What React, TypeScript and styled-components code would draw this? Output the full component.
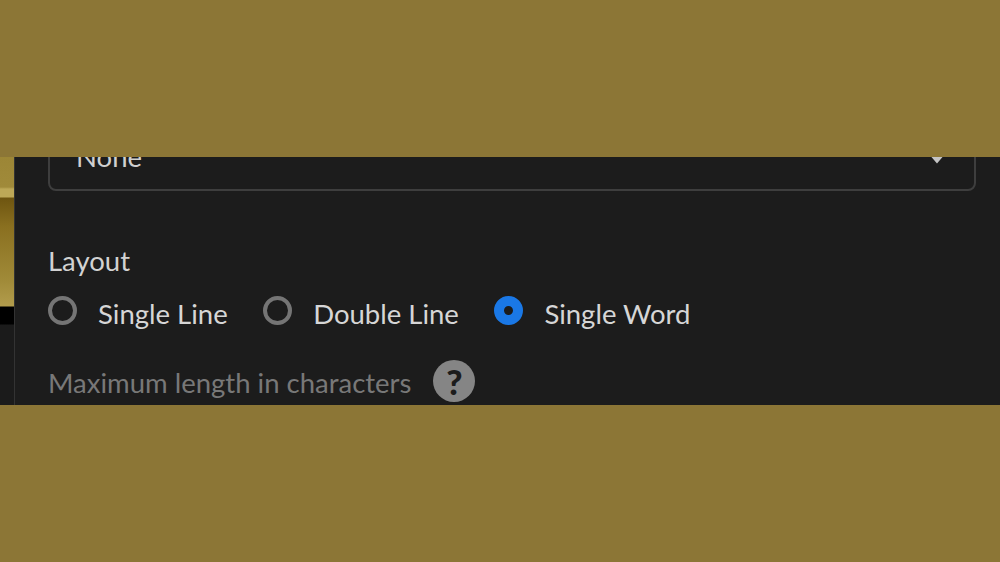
import styled, { createGlobalStyle } from 'styled-components'

const GlobalStyle = createGlobalStyle`
  html, body {
    margin: 0;
    padding: 0;
    background: #8c7636;
  }
`

const Page = styled.div`
  width: 1000px;
  height: 562px;
  display: flex;
  flex-direction: column;
  overflow: hidden;
  background: #8c7636;
`

const Band = styled.div<{ $h: number }>`
  height: ${props => props.$h}px;
  flex: none;
`

const Middle = styled.div`
  height: 248px;
  flex: none;
  display: flex;
`

const Strip = styled.div`
  width: 14px;
  flex: none;
  background: linear-gradient(
    to bottom,
    #9c8636 0,
    #a08a3a 30px,
    #bda857 32px,
    #bda857 40px,
    #6e5510 41px,
    #8a7020 70px,
    #a08a38 123px,
    #b29c4c 149px,
    #000 150px,
    #000 167px,
    #1b1b1b 168px,
    #1b1b1b 100%
  );
`

const Dialog = styled.div`
  flex: 1;
  overflow: hidden;
  background: #1c1c1c;
  border-left: 1px solid #333;
  padding: 0 24px 0 33px;
  font-family: Lato, "Open Sans", sans-serif;
`

const Select = styled.div`
  height: 69px;
  margin-top: -35px;
  box-sizing: border-box;
  border: 2px solid #3e3e3e;
  border-radius: 8px;
  display: flex;
  align-items: center;
  justify-content: space-between;
  padding: 0 27px 0 26px;
  font-size: 27.5px;
  color: #d0d0d0;
`

const Chevron = styled.svg`
  width: 20px;
  height: 16px;
`

const Heading = styled.div`
  margin-top: 52px;
  font-size: 27.5px;
  line-height: 36px;
  color: #d2d2d2;
`

const RadioRow = styled.div`
  display: flex;
  align-items: center;
  margin-top: 17px;
`

const RadioItem = styled.label`
  display: flex;
  align-items: center;
  gap: 21px;
  margin-right: 35.5px;
  font-size: 27.5px;
  line-height: 36px;
  color: #d6d6d6;
`

const RadioMark = styled.span<{ $on?: boolean }>`
  width: 29px;
  height: 29px;
  box-sizing: border-box;
  border-radius: 50%;
  margin-top: -7px;
  border: ${props => (props.$on ? '10px solid #1a78e6' : '4px solid #757575')};
  background: #1c1c1c;
`

const HintRow = styled.div`
  display: flex;
  align-items: center;
  gap: 22px;
  margin-top: 31px;
`

const HintLabel = styled.span`
  font-size: 27.5px;
  line-height: 36px;
  color: #787878;
`

const HelpBadge = styled.span`
  width: 42px;
  height: 42px;
  margin-top: -3px;
  border-radius: 50%;
  background: #858585;
  color: #1c1c1c;
  display: flex;
  align-items: center;
  justify-content: center;
  font-size: 35px;
  font-weight: 900;
`

export default function App() {
  return (
    <Page>
      <GlobalStyle />
      <Band $h={157} />
      <Middle>
        <Strip />
        <Dialog>
          <Select>
            <span>None</span>
            <Chevron viewBox="0 0 20 16">
              <path d="M2 2l8 9.5 8-9.5" fill="none" stroke="#c4c4c4" strokeWidth="4" />
            </Chevron>
          </Select>
          <Heading>Layout</Heading>
          <RadioRow>
            <RadioItem><RadioMark />Single Line</RadioItem>
            <RadioItem><RadioMark />Double Line</RadioItem>
            <RadioItem><RadioMark $on />Single Word</RadioItem>
          </RadioRow>
          <HintRow>
            <HintLabel>Maximum length in characters</HintLabel>
            <HelpBadge>?</HelpBadge>
          </HintRow>
        </Dialog>
      </Middle>
      <Band $h={157} />
    </Page>
  )
}
